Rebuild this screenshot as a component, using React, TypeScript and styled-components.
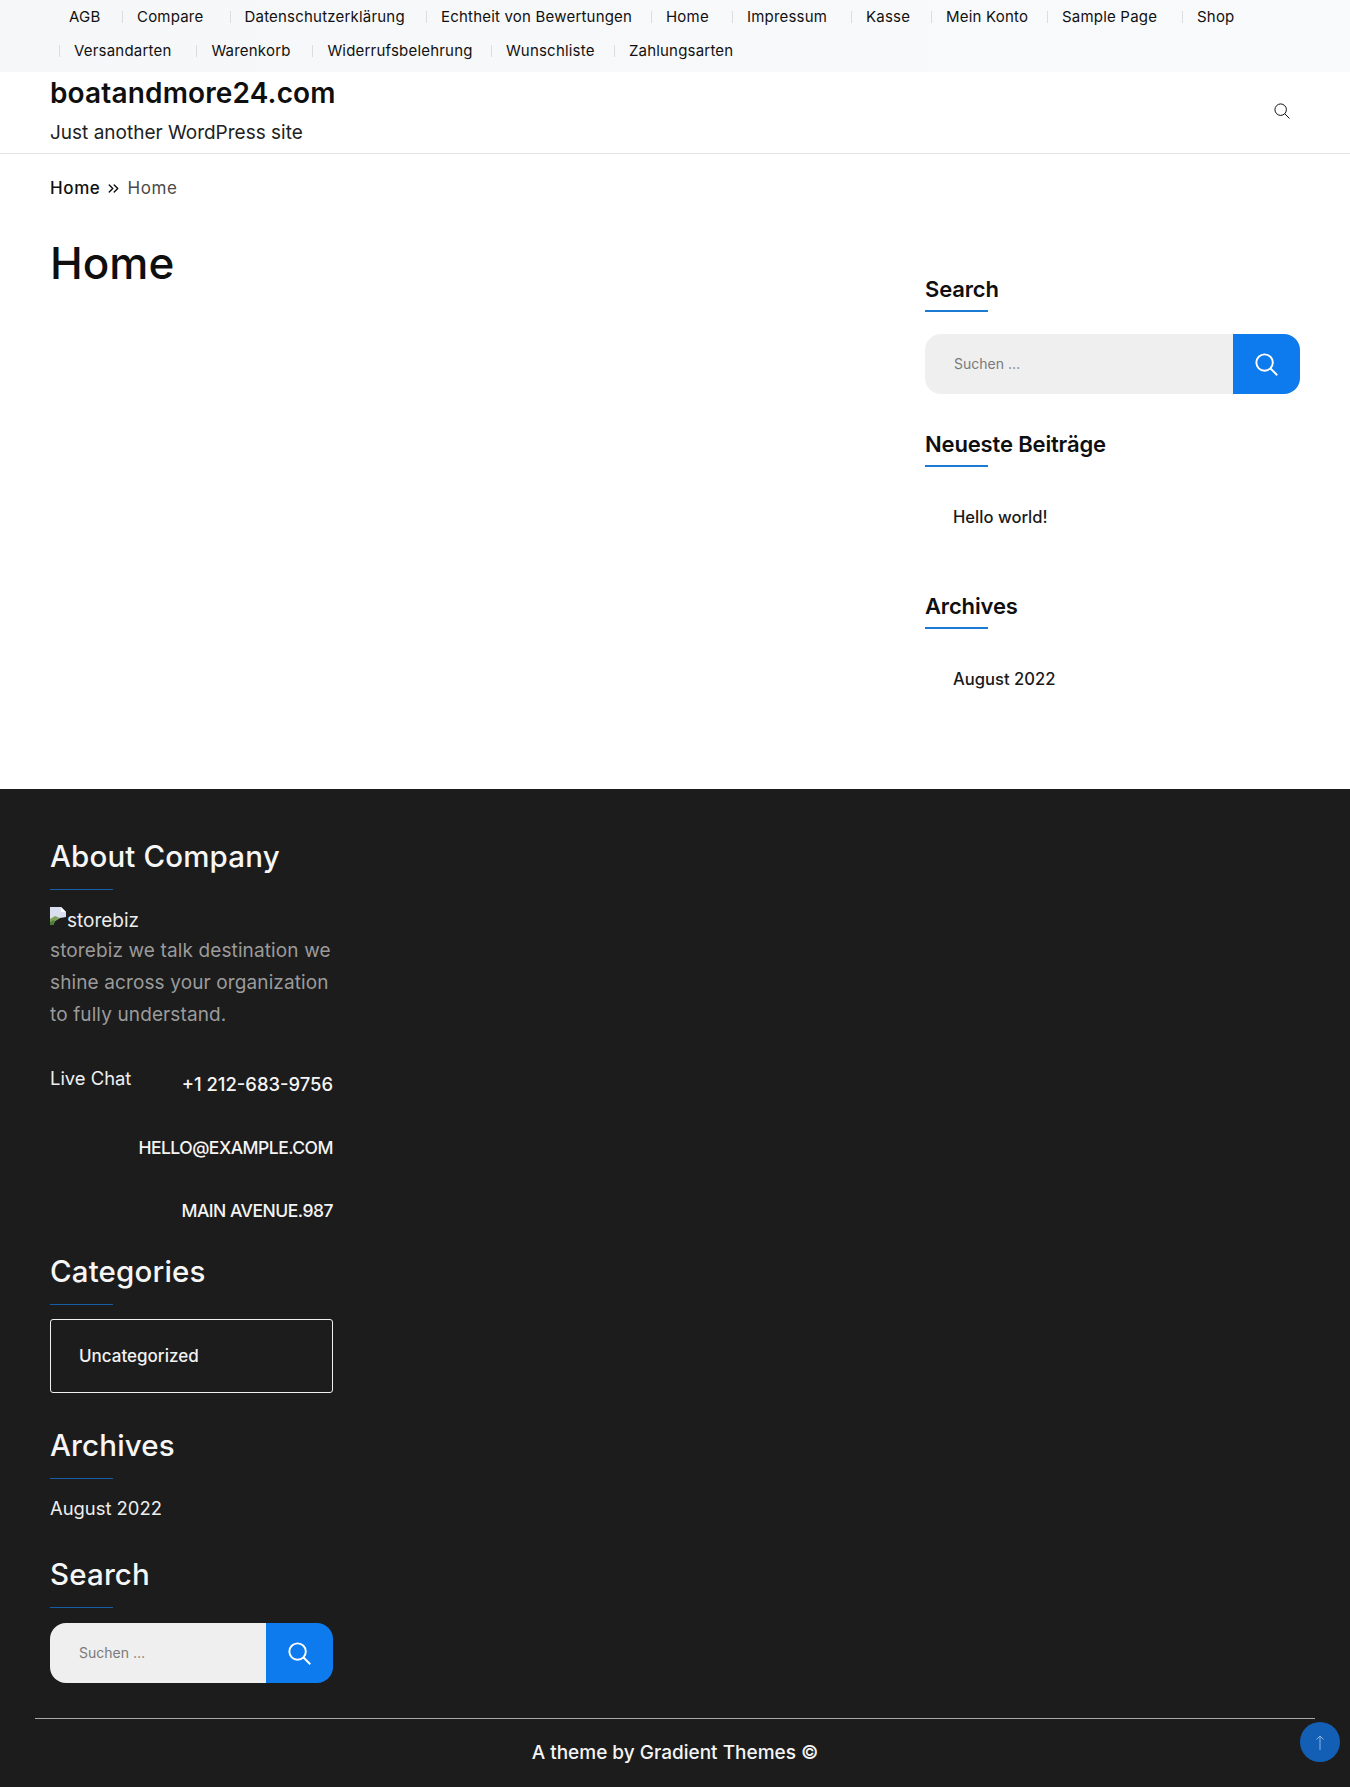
import React, {FC} from 'react';
import styled, {createGlobalStyle} from 'styled-components';
import {ChevronsRight} from 'lucide-react';

const blue = '#0d7bee';
const ink = '#0f0f10';
const night = '#1c1c1d';

const GlobalStyle = createGlobalStyle`
  html, body {
    margin: 0;
    padding: 0;
    background: #fff;
  }
  body {
    font-family: Inter, "Open Sans", "Liberation Sans", sans-serif;
    color: ${ink};
  }
  * {
    box-sizing: border-box;
  }
`;

const Page = styled.div`
  position: relative;
  width: 1350px;
  height: 1787px;
  overflow: hidden;
`;

const TopBar = styled.nav`
  height: 72px;
  background: linear-gradient(90deg, #f6f7f8, #f9fafc);
`;

const TopRow = styled.ul<{$inset: number}>`
  display: flex;
  height: 34px;
  margin: 0;
  padding: 0 0 1px ${p => p.$inset}px;
  list-style: none;
`;

const TopItem = styled.li<{$width?: number; $bare?: boolean}>`
  display: flex;
  align-items: center;
  width: ${p => (p.$width ? `${p.$width}px` : 'auto')};
  font-size: 15px;
  letter-spacing: 0.2px;
  color: #111;
  white-space: nowrap;
  &::before {
    content: '';
    display: ${p => (p.$bare ? 'none' : 'block')};
    width: 1px;
    height: 12px;
    margin-right: 14px;
    background: #dcdddf;
  }
`;

const Masthead = styled.header`
  display: flex;
  justify-content: space-between;
  height: 82px;
  padding: 0 50px;
  border-bottom: 1px solid #e3e3e3;
`;

const Brand = styled.div`
  display: flex;
  flex-direction: column;
`;

const SiteTitle = styled.div`
  margin-top: 4px;
  font-size: 28px;
  line-height: 34px;
  font-weight: 600;
  letter-spacing: 0.15px;
`;

const Tagline = styled.div`
  margin-top: 9px;
  font-size: 19px;
  line-height: 28px;
  color: #222;
`;

const HeaderSearch = styled.div`
  display: flex;
  margin: 31px 10px 0 0;
  height: 16px;
`;

const Crumbs = styled.div`
  display: flex;
  align-items: center;
  height: 28px;
  margin: 20px 0 0 50px;
  font-size: 17px;
  font-weight: 500;
  letter-spacing: 0.6px;
`;

const CrumbDim = styled.span`
  color: #4a4a4a;
  font-weight: 400;
`;

const Sep = styled.span`
  display: flex;
  margin: 0 5px;
`;

const Main = styled.main`
  display: flex;
  justify-content: space-between;
  height: 587px;
  padding: 0 50px;
`;

const Title = styled.h1`
  margin: 33px 0 0;
  font-size: 44px;
  line-height: 56px;
  font-weight: 500;
`;

const Aside = styled.aside`
  width: 375px;
  padding-top: 73px;
`;

const WidgetTitle = styled.h3<{$gap?: number}>`
  margin: ${p => p.$gap ?? 0}px 0 0;
  font-size: 22px;
  line-height: 28px;
  font-weight: 600;
  letter-spacing: -0.15px;
  &::after {
    content: '';
    display: block;
    width: 63px;
    height: 2px;
    margin-top: 7px;
    background: #1a7ad4;
  }
`;

const SearchForm = styled.form<{$top: number}>`
  display: flex;
  height: 60px;
  margin-top: ${p => p.$top}px;
`;

const SearchInput = styled.input`
  flex: 1;
  min-width: 0;
  padding: 0 0 2px 29px;
  border: 0;
  border-radius: 16px 0 0 16px;
  outline: 0;
  background: #efefef;
  font-family: inherit;
  font-size: 14px;
  &::placeholder {
    color: #7a7a7a;
    opacity: 1;
  }
`;

const SearchButton = styled.button`
  display: flex;
  align-items: center;
  justify-content: center;
  width: 67px;
  padding: 0;
  border: 0;
  border-radius: 0 16px 16px 0;
  background: ${blue};
`;

const PlainLink = styled.div<{$top: number}>`
  margin: ${p => p.$top}px 0 0 28px;
  font-size: 16.6px;
  line-height: 26px;
  font-weight: 500;
  color: #1a1a1a;
`;

const Footer = styled.footer`
  height: 1000px;
  padding-top: 48px;
  background: ${night};
  color: #fff;
`;

const FooterColumn = styled.div`
  width: 333px;
  padding-left: 50px;
`;

const FooterTitle = styled.h4<{$gap?: number}>`
  margin: ${p => p.$gap ?? 0}px 0 0;
  font-size: 29.5px;
  line-height: 38px;
  font-weight: 500;
  letter-spacing: 0.15px;
  color: #f6f6f6;
  &::after {
    content: '';
    display: block;
    width: 63px;
    height: 1px;
    margin-top: 14px;
    background: #155ea8;
  }
`;

const LogoRow = styled.div`
  display: flex;
  align-items: flex-start;
  height: 23px;
  margin-top: 17px;
  font-size: 19px;
  line-height: 28px;
  color: #ececec;
`;

const Blurb = styled.p`
  margin: 5px 0 0;
  font-size: 19px;
  line-height: 32px;
  letter-spacing: 0.12px;
  color: #9b9b9b;
`;

const ContactRow = styled.div`
  display: flex;
  justify-content: space-between;
  margin-top: 33px;
`;

const LiveChat = styled.span`
  font-size: 18.4px;
  line-height: 28px;
  color: #f0f0f0;
`;

const ContactLine = styled.div<{$top?: number}>`
  margin-top: ${p => p.$top ?? 0}px;
  text-align: right;
  font-size: 18.4px;
  line-height: 28px;
  font-weight: 500;
  color: #f4f4f4;
`;

const ContactCaps = styled(ContactLine)`
  font-size: 17.5px;
  letter-spacing: -0.5px;
`;

const CategoryBox = styled.div`
  height: 74px;
  margin-top: 14px;
  padding: 23px 0 0 28px;
  border: 1px solid #f0f0f0;
  border-radius: 3px;
  font-size: 17px;
  line-height: 26px;
  font-weight: 500;
  color: #f2f2f2;
`;

const ArchiveLink = styled.div`
  margin-top: 15px;
  font-size: 18.4px;
  line-height: 28px;
  color: #eee;
`;

const Rule = styled.div`
  width: 1280px;
  height: 1px;
  margin: 35px 0 0 35px;
  background: #a9a9a9;
`;

const Credit = styled.div`
  margin-top: 20px;
  text-align: center;
  font-size: 19px;
  line-height: 28px;
  font-weight: 500;
  color: #f4f4f4;
`;

const ScrollTop = styled.button`
  position: absolute;
  left: 1300px;
  top: 1722px;
  display: flex;
  align-items: center;
  justify-content: center;
  width: 40px;
  height: 40px;
  padding: 0;
  border: 0;
  border-radius: 50%;
  background: #125fb5;
`;

const SearchIcon: FC<{size: number; color: string; weight: number}> = ({size, color, weight}) => (
  <svg width={size} height={size} viewBox="0 0 24 24" fill="none" stroke={color} strokeWidth={weight}>
    <circle cx="10" cy="10" r="8.6" />
    <line x1="16.2" y1="16.2" x2="23.2" y2="23.2" />
  </svg>
);

const BrokenImage: FC = () => (
  <svg width="16" height="18" viewBox="0 0 16 18" style={{flex: 'none', marginRight: 1}}>
    <path d="M0 0h11l5 5v5l-6 1-5 3-2 4H0z" fill="#d9dfee" />
    <path d="M11 0l5 5h-5z" fill="#fff" />
    <path d="M0 12l5-3 5 2-5 3-2 4H0z" fill="#7fa35a" />
    <path d="M0 15l4-2 1 1-2 4H0z" fill="#4f7d3a" />
  </svg>
);

const firstRow = [
  {label: 'Compare', width: 107.5},
  {label: 'Datenschutzerklärung', width: 196.5},
  {label: 'Echtheit von Bewertungen', width: 225},
  {label: 'Home', width: 81},
  {label: 'Impressum', width: 119},
  {label: 'Kasse', width: 80},
  {label: 'Mein Konto', width: 116},
  {label: 'Sample Page', width: 135},
  {label: 'Shop'},
];

const secondRow = [
  {label: 'Versandarten', width: 137.4},
  {label: 'Warenkorb', width: 116},
  {label: 'Widerrufsbelehrung', width: 178.5},
  {label: 'Wunschliste', width: 123},
  {label: 'Zahlungsarten'},
];

const Search: FC<{top: number}> = ({top}) => (
  <SearchForm $top={top}>
    <SearchInput placeholder="Suchen …" />
    <SearchButton type="button" aria-label="Suchen">
      <SearchIcon size={23} color="#fff" weight={2} />
    </SearchButton>
  </SearchForm>
);

export default function App() {
  return (
    <Page>
      <GlobalStyle />
      <TopBar>
        <TopRow $inset={69}>
          <TopItem $bare $width={53}>AGB</TopItem>
          {firstRow.map(item => <TopItem key={item.label} $width={item.width}>{item.label}</TopItem>)}
        </TopRow>
        <TopRow $inset={59}>
          {secondRow.map(item => <TopItem key={item.label} $width={item.width}>{item.label}</TopItem>)}
        </TopRow>
      </TopBar>
      <Masthead>
        <Brand>
          <SiteTitle>boatandmore24.com</SiteTitle>
          <Tagline>Just another WordPress site</Tagline>
        </Brand>
        <HeaderSearch>
          <SearchIcon size={16} color="#111" weight={1.5} />
        </HeaderSearch>
      </Masthead>
      <Crumbs>
        Home
        <Sep><ChevronsRight size={17} strokeWidth={2} /></Sep>
        <CrumbDim>Home</CrumbDim>
      </Crumbs>
      <Main>
        <Title>Home</Title>
        <Aside>
          <WidgetTitle>Search</WidgetTitle>
          <Search top={22} />
          <WidgetTitle $gap={36}>Neueste Beiträge</WidgetTitle>
          <PlainLink $top={37}>Hello world!</PlainLink>
          <WidgetTitle $gap={62}>Archives</WidgetTitle>
          <PlainLink $top={37}>August 2022</PlainLink>
        </Aside>
      </Main>
      <Footer>
        <FooterColumn>
          <FooterTitle>About Company</FooterTitle>
          <LogoRow><BrokenImage />storebiz</LogoRow>
          <Blurb>storebiz we talk destination we shine across your organization to fully understand.</Blurb>
          <ContactRow>
            <LiveChat>Live Chat</LiveChat>
            <ContactLine $top={6}>+1 212-683-9756</ContactLine>
          </ContactRow>
          <ContactCaps $top={36}>HELLO@EXAMPLE.COM</ContactCaps>
          <ContactCaps $top={35}>MAIN AVENUE.987</ContactCaps>
          <FooterTitle $gap={27}>Categories</FooterTitle>
          <CategoryBox>Uncategorized</CategoryBox>
          <FooterTitle $gap={33}>Archives</FooterTitle>
          <ArchiveLink>August 2022</ArchiveLink>
          <FooterTitle $gap={33}>Search</FooterTitle>
          <Search top={15} />
        </FooterColumn>
        <Rule />
        <Credit>A theme by Gradient Themes ©</Credit>
      </Footer>
      <ScrollTop type="button" aria-label="Nach oben">
        <svg width="10" height="15" viewBox="0 0 10 15" fill="none" stroke="#8fb6e4" strokeWidth="1">
          <path d="M5 15V1M1.5 4.5 5 1l3.5 3.5" />
        </svg>
      </ScrollTop>
    </Page>
  );
}
